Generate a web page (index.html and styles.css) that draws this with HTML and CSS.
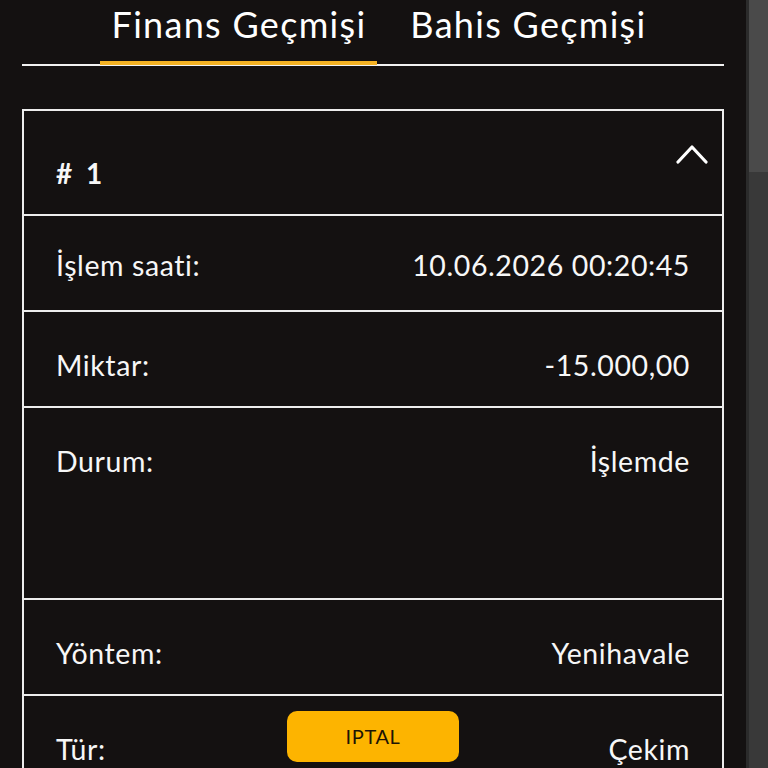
FILE: index.html
```html
<!DOCTYPE html>
<html lang="tr">
<head>
<meta charset="utf-8">
<title>Finans Geçmişi</title>
<link rel="stylesheet" href="styles.css">
</head>
<body>
<div class="page">
  <nav class="tabs">
    <a class="tab tab-active">Finans Geçmişi</a>
    <a class="tab">Bahis Geçmişi</a>
  </nav>
  <section class="card">
    <header class="card-head">
      <span class="card-id"># 1</span>
      <svg class="chevron" width="32" height="22" viewBox="0 0 32 22" aria-hidden="true">
        <polyline points="2,18 16,3 30,18" fill="none" stroke="#ffffff" stroke-width="3.2" stroke-linecap="round" stroke-linejoin="round"/>
      </svg>
    </header>
    <div class="row row-first">
      <span class="label">İşlem saati:</span>
      <span class="value">10.06.2026 00:20:45</span>
    </div>
    <div class="row">
      <span class="label">Miktar:</span>
      <span class="value">-15.000,00</span>
    </div>
    <div class="row row-tall">
      <span class="label">Durum:</span>
      <span class="value">İşlemde</span>
    </div>
    <div class="row">
      <span class="label">Yöntem:</span>
      <span class="value">Yenihavale</span>
    </div>
    <div class="row row-type">
      <span class="label">Tür:</span>
      <button class="cancel">IPTAL</button>
      <span class="value">Çekim</span>
    </div>
  </section>
</div>
<div class="scrollbar"><div class="scroll-thumb"></div></div>
</body>
</html>
```
FILE: styles.css
```css
html {
  overflow: hidden;
}
body {
  margin: 0;
  background: #141111;
  color: #f7f7f7;
  font-family: Lato, "Open Sans", sans-serif;
}
.page {
  padding: 0 44px 0 22px;
}
.tabs {
  display: flex;
  justify-content: center;
  gap: 21px;
  border-bottom: 2px solid #f2f2f2;
  padding-left: 11px;
}
.tab {
  font-size: 36px;
  letter-spacing: 1.3px;
  line-height: 42px;
  padding: 3px 11px 16px 12px;
  border-bottom: 4px solid transparent;
  margin-bottom: -1px;
  color: #ffffff;
  cursor: pointer;
}
.tab-active {
  border-bottom-color: #f5b324;
}
.card {
  margin-top: 43px;
  border: 2px solid #ededed;
}
.card-head {
  height: 103px;
  display: flex;
  justify-content: space-between;
  align-items: flex-start;
  padding: 0 14px 0 32px;
  box-sizing: border-box;
}
.card-id {
  font-size: 28px;
  font-weight: 700;
  line-height: 34px;
  margin-top: 45px;
  letter-spacing: 1px;
  word-spacing: 5px;
}
.chevron {
  margin-top: 33px;
}
.row {
  border-top: 2px solid #ededed;
  height: 94px;
  box-sizing: content-box;
  padding: 0 32px;
  display: flex;
  justify-content: space-between;
  align-items: flex-start;
  font-size: 28.5px;
  letter-spacing: 0.6px;
  line-height: 34px;
}
.label,
.value {
  margin-top: 36px;
}
.row-first .label,
.row-first .value {
  margin-top: 32px;
}
.row-tall {
  height: 190px;
}
.row-type {
  display: grid;
  grid-template-columns: 1fr auto 1fr;
  align-items: start;
}
.row-type .value {
  justify-self: end;
}
.cancel {
  margin-top: 15px;
  width: 172px;
  height: 51px;
  border: none;
  border-radius: 10px;
  background: #fdb400;
  color: #1e1505;
  font-family: Lato, "Open Sans", sans-serif;
  font-size: 20px;
  letter-spacing: 0.6px;
  padding: 0 0 2px;
  cursor: pointer;
}
.scrollbar {
  position: fixed;
  top: 0;
  right: 0;
  width: 22px;
  height: 100%;
  background: #393939;
  border-left: 3px solid #2b2b2b;
  box-sizing: border-box;
}
.scroll-thumb {
  height: 172px;
  background: #4a4a4a;
}
```
